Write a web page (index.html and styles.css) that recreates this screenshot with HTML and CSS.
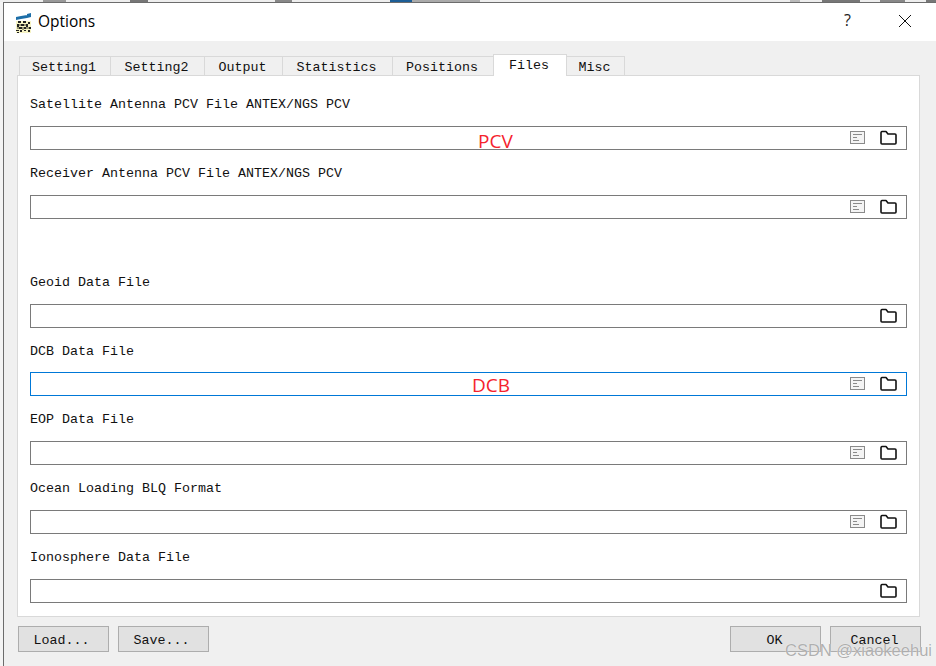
FILE: index.html
```html
<!DOCTYPE html>
<html lang="en">
<head>
<meta charset="utf-8">
<title>Options</title>
<link rel="stylesheet" href="styles.css">
</head>
<body>
<svg class="defs" width="0" height="0" aria-hidden="true">
  <symbol id="ico-list" viewBox="0 0 15 13">
    <rect x="0.5" y="0.5" width="14" height="12" fill="#f4f4f4" stroke="#8a8a8a"/>
    <path d="M3 3.5h9M3 6.5h4M3 9.5h6" stroke="#8a8a8a" fill="none"/>
  </symbol>
  <symbol id="ico-folder" viewBox="0 0 17 15">
    <path d="M1 3V13a1 1 0 0 0 1 1H15a1 1 0 0 0 1-1V5a1 1 0 0 0-1-1H8L6 1.500H2A1 1.500 0 0 0 1 3Z" fill="#fff" stroke="#111" stroke-width="1.600" stroke-linejoin="round"/>
  </symbol>
</svg>
<div class="backdrop"></div>
<div class="window">
  <header class="titlebar">
    <svg class="app-icon" width="17" height="20" viewBox="0 0 17 20" aria-hidden="true">
      <path d="M1 4l5-1v3l-5 1zM6 3l6-1v3l-6 1zM12 1l4-1v4l-4 1z" fill="#1c6ea8"/>
      <path d="M1 8h15v12H1z" fill="#f6f3c4"/>
      <path d="M3 8h3v2H3zM8 8h3v2H8zM13 9h2v2h-2zM2 11h2v3H2zM6 11h3v2H6zM11 11h2v3h-2zM4 14h3v2H4zM9 14h2v2H9zM14 14h2v2h-2zM1 17h3v1H1zM5 17h2v2H5zM9 17h2v1H9zM13 17h2v2h-2zM2 19h2v1H2z" fill="#222"/>
      <path d="M4 11h2v2H4zM9 11h2v2H9zM2 14h2v2H2zM7 14h2v3H7zM11 14h3v2h-3z" fill="#9a9a78"/>
    </svg>
    <span class="title">Options</span>
    <span class="help">?</span>
    <svg class="close" width="14" height="14" viewBox="0 0 14 14" aria-hidden="true"><path d="M1 1l12 12M13 1L1 13" stroke="#111" stroke-width="1" fill="none"/></svg>
  </header>
  <main class="body">
    <nav class="tabs">
      <span class="tab t-set1">Setting1</span>
      <span class="tab t-set2">Setting2</span>
      <span class="tab t-out">Output</span>
      <span class="tab t-stat">Statistics</span>
      <span class="tab t-pos">Positions</span>
      <span class="tab t-files active">Files</span>
      <span class="tab t-misc">Misc</span>
    </nav>
    <section class="pane">
      <div class="row">
        <label class="label">Satellite Antenna PCV File ANTEX/NGS PCV</label>
        <div class="input">
          <span class="note note-pcv">PCV</span>
          <svg class="i-list"><use href="#ico-list"/></svg>
          <svg class="i-folder"><use href="#ico-folder"/></svg>
        </div>
      </div>
      <div class="row row-spaced">
        <label class="label">Receiver Antenna PCV File ANTEX/NGS PCV</label>
        <div class="input">
          <svg class="i-list"><use href="#ico-list"/></svg>
          <svg class="i-folder"><use href="#ico-folder"/></svg>
        </div>
      </div>
      <div class="row">
        <label class="label">Geoid Data File</label>
        <div class="input">
          <svg class="i-folder"><use href="#ico-folder"/></svg>
        </div>
      </div>
      <div class="row row-tight">
        <label class="label">DCB Data File</label>
        <div class="input focused">
          <span class="note note-dcb">DCB</span>
          <svg class="i-list"><use href="#ico-list"/></svg>
          <svg class="i-folder"><use href="#ico-folder"/></svg>
        </div>
      </div>
      <div class="row">
        <label class="label">EOP Data File</label>
        <div class="input">
          <svg class="i-list"><use href="#ico-list"/></svg>
          <svg class="i-folder"><use href="#ico-folder"/></svg>
        </div>
      </div>
      <div class="row">
        <label class="label">Ocean Loading BLQ Format</label>
        <div class="input">
          <svg class="i-list"><use href="#ico-list"/></svg>
          <svg class="i-folder"><use href="#ico-folder"/></svg>
        </div>
      </div>
      <div class="row">
        <label class="label">Ionosphere Data File</label>
        <div class="input">
          <svg class="i-folder"><use href="#ico-folder"/></svg>
        </div>
      </div>
    </section>
    <footer class="actions">
      <button class="btn btn-file">Load...</button>
      <button class="btn btn-file">Save...</button>
      <span class="grow"></span>
      <button class="btn">OK</button>
      <button class="btn">Cancel</button>
    </footer>
  </main>
</div>
<div class="watermark">CSDN @xiaokeehui</div>
</body>
</html>
```
FILE: styles.css
```css
* { box-sizing: border-box; }
html, body { margin: 0; height: 100%; }
body {
  position: relative;
  width: 936px;
  height: 666px;
  overflow: hidden;
  background: #f4f4f4;
  padding: 2px 0 0 3px;
  font-family: "Liberation Mono", monospace;
  font-size: 13.33px;
  color: #111;
}
.defs { position: absolute; }
.backdrop {
  position: absolute;
  left: 0; top: 0; right: 0;
  height: 2px;
  background: linear-gradient(90deg,
    #eee 0 43px, #999 43px 66px, #eee 66px 130px, #777 130px 148px, #eee 148px 275px,
    #888 275px 292px, #eee 292px 390px, #1d5e96 390px 412px, #aaa 412px 480px, #eee 480px 790px,
    #bbb 790px 800px, #eee 800px 822px, #777 822px 860px, #eee 860px 880px, #888 880px 905px, #eee 905px 926px, #777 926px);
}
.window {
  width: 933px;
  height: 664px;
  border-left: 1px solid #6c6c6c;
  border-top: 1px solid #6c6c6c;
  display: flex;
  flex-direction: column;
}
.titlebar {
  height: 38px;
  flex: none;
  background: #fff;
  display: flex;
  align-items: center;
  padding: 0 24px 0 11px;
}
.app-icon { flex: none; margin-top: 1px; }
.title {
  margin-left: 6px;
  padding-bottom: 3px;
  font-family: "Open Sans", sans-serif;
  font-size: 15.5px;
  color: #000;
  flex: 1;
}
.help {
  font-family: "Open Sans", sans-serif;
  font-size: 16px;
  padding-bottom: 4px;
  margin-right: 47px;
  color: #222;
}
.close { flex: none; margin-bottom: 3px; }
.body {
  flex: 1;
  background: #f0f0f0;
  padding: 13px 15px 0 13px;
  display: flex;
  flex-direction: column;
}
.tabs {
  display: flex;
  align-items: flex-end;
  height: 22px;
  padding-left: 2px;
  margin-bottom: -1px;
  position: relative;
  z-index: 1;
}
.tab {
  height: 20px;
  line-height: 21px;
  padding-right: 2px;
  text-align: center;
  background: #f0f0f0;
  border: 1px solid #d9d9d9;
  border-left: 0;
  flex: none;
}
.t-set1 { width: 92px; border-left: 1px solid #d9d9d9; }
.t-set2 { width: 94px; }
.t-out { width: 78px; }
.t-stat { width: 110px; }
.t-pos { width: 101px; }
.t-files { width: 74px; }
.t-misc { width: 58px; }
.tab.active {
  height: 22px;
  line-height: 21px;
  background: #fff;
  border-bottom: 0;
  border-left: 1px solid #d9d9d9;
  margin-left: -1px;
}
.pane {
  width: 903px;
  background: #fff;
  border: 1px solid #d9d9d9;
  padding: 18px 12px 0 12px;
}
.row { display: flex; flex-direction: column; padding-bottom: 13px; }
.row-spaced { padding-bottom: 53px; }
.label { height: 20px; line-height: 22px; margin-bottom: 12px; }
.row-tight .label { margin-bottom: 11px; }
.input {
  position: relative;
  height: 24px;
  border: 1px solid #7a7a7a;
  background: #fff;
  display: flex;
  align-items: center;
  justify-content: flex-end;
  padding: 0 9px 2px 0;
}
.input.focused { border-color: #0078d7; }
.i-list { width: 15px; height: 13px; margin-right: 15px; }
.i-folder { width: 17px; height: 15px; }
.note {
  position: absolute;
  font-family: "Open Sans", sans-serif;
  font-size: 19px;
  line-height: 20px;
  color: #f5222d;
}
.note-pcv { left: 447px; top: 4px; }
.note-dcb { left: 441px; top: 2px; }
.actions {
  width: 904px;
  display: flex;
  gap: 9px;
  margin-top: 9px;
  padding-left: 1px;
}
.grow { flex: 1; }
.btn {
  width: 91px;
  height: 26px;
  padding: 2px 2px 0 0;
  background: #e1e1e1;
  border: 1px solid #adadad;
  font: inherit;
  color: #111;
}
.btn-file { padding-right: 4px; }
.watermark {
  position: absolute;
  left: 785px;
  top: 640px;
  font-family: "Liberation Sans", sans-serif;
  font-size: 16.5px;
  line-height: 20px;
  color: rgba(150, 150, 150, 0.75);
  text-shadow: 0 0 1px #fff;
  white-space: nowrap;
}
```
